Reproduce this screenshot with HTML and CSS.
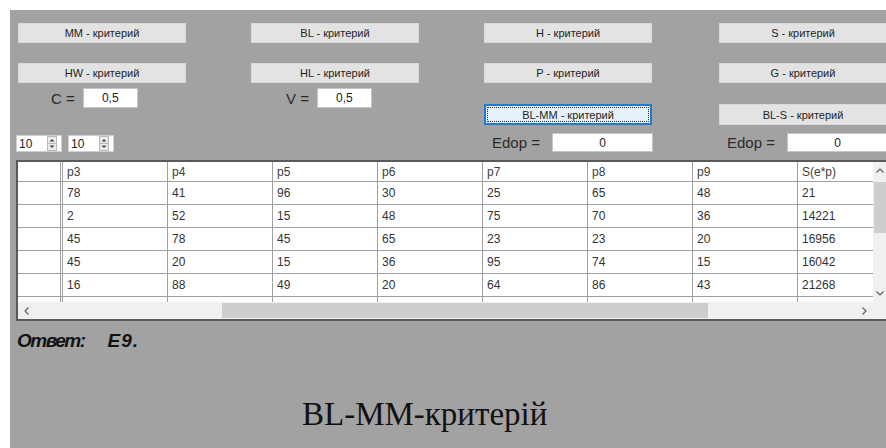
FILE: index.html
```html
<!DOCTYPE html>
<html lang="ru">
<head>
<meta charset="utf-8">
<title>BL-MM-критерій</title>
<link rel="stylesheet" href="styles.css">
</head>
<body>
<div class="page">
  <div class="form">
    <div class="controls">
      <div class="col col-1">
        <button class="btn">MM - критерий</button>
        <button class="btn btn-row2">HW - критерий</button>
        <div class="param param-c"><span class="lbl">C =</span><span class="tb tb-short">0,5</span></div>
        <div class="spinners">
          <div class="spin"><span>10</span>
            <svg width="10" height="15" viewBox="0 0 10 15"><rect x="0.5" y="0.5" width="9" height="14" fill="#ececec" stroke="#b9b9b9"/><line x1="0.5" y1="7.5" x2="9.5" y2="7.5" stroke="#b9b9b9"/><path d="M2.5 5.5 L5 3 L7.5 5.5 Z" fill="#444"/><path d="M2.5 9.5 L5 12 L7.5 9.5 Z" fill="#444"/></svg>
          </div>
          <div class="spin"><span>10</span>
            <svg width="10" height="15" viewBox="0 0 10 15"><rect x="0.5" y="0.5" width="9" height="14" fill="#ececec" stroke="#b9b9b9"/><line x1="0.5" y1="7.5" x2="9.5" y2="7.5" stroke="#b9b9b9"/><path d="M2.5 5.5 L5 3 L7.5 5.5 Z" fill="#444"/><path d="M2.5 9.5 L5 12 L7.5 9.5 Z" fill="#444"/></svg>
          </div>
        </div>
      </div>
      <div class="col col-2">
        <button class="btn">BL - критерий</button>
        <button class="btn btn-row2">HL - критерий</button>
        <div class="param param-v"><span class="lbl">V =</span><span class="tb tb-short">0,5</span></div>
      </div>
      <div class="col col-3">
        <button class="btn">H - критерий</button>
        <button class="btn btn-row2">P - критерий</button>
        <button class="btn btn-row3 btn-focus">BL-MM - критерий</button>
        <div class="edop"><span class="lbl">Edop =</span><span class="tb tb-long">0</span></div>
      </div>
      <div class="col col-4">
        <button class="btn">S - критерий</button>
        <button class="btn btn-row2">G - критерий</button>
        <button class="btn btn-row3">BL-S - критерий</button>
        <div class="edop"><span class="lbl">Edop =</span><span class="tb tb-long">0</span></div>
      </div>
    </div>

    <div class="gv">
      <div class="gv-cells">
        <div class="gv-row gv-head"><div class="rh"></div><div>p3</div><div>p4</div><div>p5</div><div>p6</div><div>p7</div><div>p8</div><div>p9</div><div>S(e*p)</div></div>
        <div class="gv-row"><div class="rh"></div><div>78</div><div>41</div><div>96</div><div>30</div><div>25</div><div>65</div><div>48</div><div>21</div></div>
        <div class="gv-row"><div class="rh"></div><div>2</div><div>52</div><div>15</div><div>48</div><div>75</div><div>70</div><div>36</div><div>14221</div></div>
        <div class="gv-row"><div class="rh"></div><div>45</div><div>78</div><div>45</div><div>65</div><div>23</div><div>23</div><div>20</div><div>16956</div></div>
        <div class="gv-row"><div class="rh"></div><div>45</div><div>20</div><div>15</div><div>36</div><div>95</div><div>74</div><div>15</div><div>16042</div></div>
        <div class="gv-row"><div class="rh"></div><div>16</div><div>88</div><div>49</div><div>20</div><div>64</div><div>86</div><div>43</div><div>21268</div></div>
        <div class="gv-row"><div class="rh"></div><div></div><div></div><div></div><div></div><div></div><div></div><div></div><div></div></div>
      </div>
      <div class="vscroll">
        <div class="arrow"><svg width="8" height="5" viewBox="0 0 8 5"><polyline points="0.5,4.5 4,1 7.5,4.5" fill="none" stroke="#606060" stroke-width="1.2"/></svg></div>
        <div class="vthumb"></div>
        <div class="arrow arrow-down"><svg width="8" height="5" viewBox="0 0 8 5"><polyline points="0.5,0.5 4,4 7.5,0.5" fill="none" stroke="#606060" stroke-width="1.2"/></svg></div>
      </div>
      <div class="hscroll">
        <div class="arrow"><svg width="5" height="8" viewBox="0 0 5 8"><polyline points="4.5,0.5 1,4 4.5,7.5" fill="none" stroke="#606060" stroke-width="1.2"/></svg></div>
        <div class="hthumb"></div>
        <div class="arrow arrow-right"><svg width="5" height="8" viewBox="0 0 5 8"><polyline points="0.5,0.5 4,4 0.5,7.5" fill="none" stroke="#606060" stroke-width="1.2"/></svg></div>
      </div>
      <div class="corner"></div>
    </div>

    <p class="answer"><span class="answer-key">Ответ:</span><span class="answer-val">E9.</span></p>
    <p class="caption">BL-MM-критерій</p>
  </div>
</div>
</body>
</html>
```

FILE: styles.css
```css
* { box-sizing: border-box; }

html, body {
  margin: 0;
  padding: 0;
}

body {
  width: 886px;
  height: 448px;
  overflow: hidden;
  background: #ffffff;
  font-family: "Liberation Sans", Arial, sans-serif;
}

.page {
  padding: 10px 0 0 10px;
  height: 448px;
}

.form {
  width: 876px;
  height: 438px;
  background: #a2a2a2;
  overflow: hidden;
}

/* ---- top control block ---- */
.controls {
  display: flex;
  height: 150px;
  padding-left: 8px;
}

.col {
  flex: none;
  display: flex;
  flex-direction: column;
  align-items: flex-start;
  padding-top: 13px;
}
.col-1, .col-2 { width: 233px; }
.col-3 { width: 235px; }
.col-4 { width: 168px; }

.btn {
  flex: none;
  width: 168px;
  height: 20px;
  margin: 0;
  padding: 0;
  border: 1px solid #d9d9d9;
  background: #e3e3e3;
  font: 11px "Liberation Sans", Arial, sans-serif;
  color: #1e1e1e;
  display: flex;
  align-items: center;
  justify-content: center;
}
.btn-row2 { margin-top: 20px; }
.btn-row3 { margin-top: 21px; height: 21px; }

.btn-focus {
  position: relative;
  border: 2px solid #1a7fd4;
  background: #e5f1fb;
}
.btn-focus::after {
  content: "";
  position: absolute;
  inset: 1px;
  border: 1px dotted #333;
}

.lbl {
  font-size: 15px;
  color: #2a2a2a;
  white-space: nowrap;
}

.tb {
  background: #ffffff;
  border: 1px solid #c6c6c6;
  display: flex;
  align-items: center;
  justify-content: center;
  font-size: 12px;
  color: #222;
}
.tb-short { width: 55px; height: 20px; }
.tb-long { width: 101px; height: 19px; }

.param {
  margin-top: 5px;
  height: 20px;
  display: flex;
  align-items: center;
  gap: 8px;
}
.param-c { padding-left: 33px; }
.param-v { padding-left: 35px; }

.edop {
  margin-top: 8px;
  height: 19px;
  display: flex;
  align-items: center;
  gap: 12px;
  padding-left: 8px;
}

.spinners {
  margin-top: 27px;
  margin-left: -2px;
  display: flex;
  gap: 6px;
}
.spin {
  width: 46px;
  height: 17px;
  background: #ffffff;
  border: 1px solid #cfcfcf;
  display: flex;
  align-items: center;
  justify-content: space-between;
  padding: 0 4px 0 2px;
  font-size: 12px;
  color: #222;
}
.spin svg { display: block; }

/* ---- data grid ---- */
.gv {
  margin-left: 6px;
  width: 876px;
  height: 161px;
  border: 2px solid #5a5a5a;
  background: #f0f0f0;
  display: grid;
  grid-template-columns: 855px 17px;
  grid-template-rows: 140px 17px;
}

.gv-cells {
  overflow: hidden;
  background: #ffffff;
}

.gv-row {
  display: grid;
  grid-template-columns: 45px repeat(8, 105px);
  height: 23px;
}
.gv-head { height: 20px; }

.gv-row > div {
  border-right: 1px solid #a0a0a0;
  border-bottom: 1px solid #a0a0a0;
  padding-left: 4px;
  font-size: 12px;
  color: #333;
  display: flex;
  align-items: center;
  white-space: nowrap;
}
.gv-head > div { color: #3c3c3c; }
.gv-row > .rh { border-right: 3px double #a0a0a0; }

.vscroll {
  display: flex;
  flex-direction: column;
  background: #f0f0f0;
}
.arrow {
  flex: none;
  width: 17px;
  height: 17px;
  display: flex;
  align-items: center;
  justify-content: center;
}
.vscroll .arrow { justify-content: flex-start; padding-left: 3px; }
.vthumb {
  margin: 3px 1px 0 1px;
  height: 51px;
  background: #cdcdcd;
}
.arrow-down { margin-top: auto; }

.hscroll {
  display: flex;
  align-items: center;
  background: #f0f0f0;
}
.hthumb {
  margin-left: 187px;
  width: 486px;
  height: 15px;
  background: #cdcdcd;
}
.arrow-right { margin-left: auto; }

.corner { background: #f0f0f0; }

/* ---- result text ---- */
.answer {
  margin: 9px 0 0 7px;
  font: italic bold 19px/22px "Liberation Sans", Arial, sans-serif;
  color: #121212;
}
.answer-key { letter-spacing: -1.5px; }
.answer-val { margin-left: 23px; letter-spacing: 1px; }

.caption {
  margin: 43px 0 0 292px;
  font: 33px/38px "Liberation Serif", "Times New Roman", serif;
  color: #111;
}
```
